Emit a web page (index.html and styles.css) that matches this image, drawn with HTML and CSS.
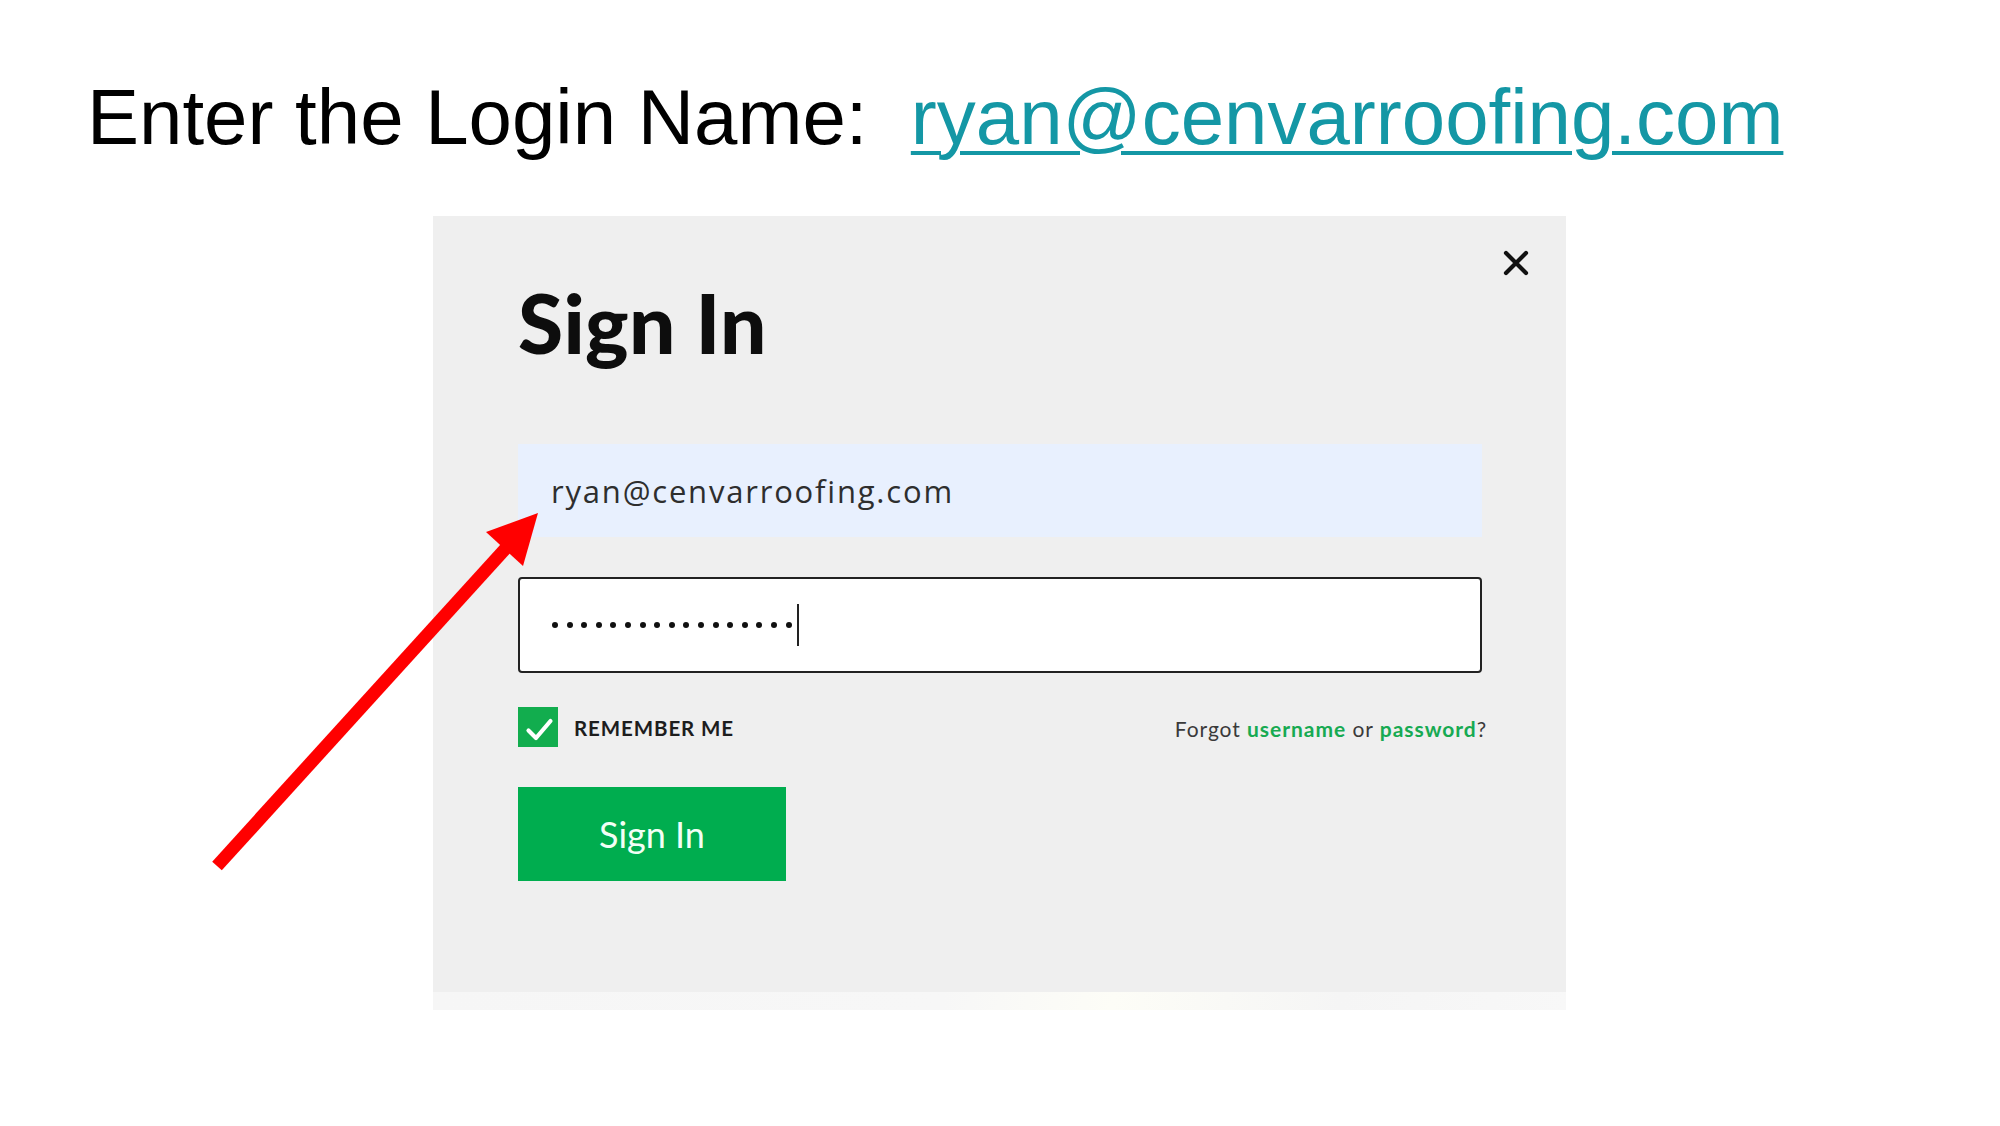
FILE: index.html
```html
<!DOCTYPE html>
<html lang="en">
<head>
<meta charset="utf-8">
<title>Enter the Login Name</title>
<link rel="stylesheet" href="styles.css">
</head>
<body>
<div class="slide">
  <h1 class="slide-title">Enter the Login Name:&nbsp;&nbsp;<a class="slide-link" href="#">ryan@cenvarroofing.com</a></h1>

  <div class="modal">
    <button class="close-btn" aria-label="Close">
      <svg width="26" height="26" viewBox="0 0 26 26"><path d="M3 3 L23 23 M23 3 L3 23" stroke="#111" stroke-width="4.2" stroke-linecap="round"/></svg>
    </button>
    <div class="modal-body">
      <h2 class="modal-title">Sign In</h2>
      <div class="field field-filled">ryan@cenvarroofing.com</div>
      <div class="field field-password">
        <div class="dots">
          <span></span><span></span><span></span><span></span><span></span><span></span><span></span><span></span><span></span><span></span><span></span><span></span><span></span><span></span><span></span><span></span><span></span>
        </div>
        <span class="caret"></span>
      </div>
      <div class="options">
        <label class="remember">
          <span class="checkbox">
            <svg width="40" height="40" viewBox="0 0 40 40"><path d="M10.5 23.5 L18 31 L32.5 14" fill="none" stroke="#fff" stroke-width="4.2" stroke-linecap="round" stroke-linejoin="round"/></svg>
          </span>
          <span class="remember-text">REMEMBER ME</span>
        </label>
        <div class="forgot">Forgot <a href="#">username</a> or <a href="#">password</a>?</div>
      </div>
      <button class="signin-btn">Sign In</button>
    </div>
    <div class="modal-foot"></div>
  </div>

  <svg class="arrow" width="2000" height="1126" viewBox="0 0 2000 1126">
    <line x1="217" y1="866" x2="506" y2="548" stroke="#ff0000" stroke-width="13"/>
    <polygon points="538,513 486,532 523,566" fill="#ff0000"/>
  </svg>
</div>
</body>
</html>
```
FILE: styles.css
```css
* { box-sizing: border-box; }

html, body {
  margin: 0;
  padding: 0;
  background: #ffffff;
  overflow: hidden;
}

.slide {
  position: relative;
  width: 2000px;
  height: 1126px;
  padding-top: 72px;
}

.slide-title {
  margin: 0;
  padding-left: 87px;
  font-family: "Liberation Sans", Arial, sans-serif;
  font-weight: 400;
  font-size: 78px;
  line-height: 90px;
  color: #000;
  white-space: nowrap;
}

.slide-link {
  color: #1497a5;
  text-decoration: underline;
  text-decoration-thickness: 4px;
  text-underline-offset: 7px;
}

.modal {
  position: relative;
  margin-top: 54px;
  margin-left: 433px;
  width: 1133px;
  height: 794px;
  background: #efefef;
  display: flex;
  flex-direction: column;
}

.close-btn {
  position: absolute;
  left: 1070px;
  top: 34px;
  width: 26px;
  height: 26px;
  padding: 0;
  border: 0;
  background: transparent;
}

.close-btn svg { display: block; }

.modal-body {
  flex: 1;
  padding: 58px 0 0 85px;
  font-family: Lato, "Open Sans", sans-serif;
}

.modal-title {
  margin: 0;
  font-family: Lato, sans-serif;
  font-weight: 900;
  font-size: 82px;
  line-height: 96px;
  color: #0d0d0d;
  letter-spacing: 0.3px;
}

.field {
  width: 964px;
  height: 93px;
  display: flex;
  align-items: center;
}

.field-filled {
  margin-top: 74px;
  background: #e8f0fe;
  padding-left: 33px;
  font-family: "Open Sans", sans-serif;
  font-size: 31px;
  line-height: 40px;
  letter-spacing: 1.8px;
  color: #2e2e2e;
}

.field-password {
  margin-top: 40px;
  height: 96px;
  background: #ffffff;
  border: 2.5px solid #222;
  border-radius: 4px;
  padding-left: 32px;
}

.dots {
  display: flex;
  gap: 8.6px;
}

.dots span {
  width: 6px;
  height: 6px;
  border-radius: 50%;
  background: #111;
}

.caret {
  width: 2px;
  height: 42px;
  margin-left: 5px;
  background: #222;
}

.options {
  margin-top: 34px;
  width: 969px;
  height: 40px;
  display: flex;
  align-items: center;
  justify-content: space-between;
}

.remember {
  display: flex;
  align-items: center;
  gap: 16px;
}

.checkbox {
  width: 40px;
  height: 40px;
  background: #12ad4e;
}

.checkbox svg { display: block; }

.remember-text {
  font-family: Lato, sans-serif;
  font-weight: 700;
  font-size: 20.5px;
  letter-spacing: 0.9px;
  color: #1d1d1d;
  padding-top: 2px;
}

.forgot {
  font-family: Lato, sans-serif;
  font-size: 21px;
  color: #3a3a3a;
  padding-top: 2px;
  letter-spacing: 0.95px;
}

.forgot a {
  color: #17aa52;
  font-weight: 700;
  text-decoration: none;
}

.signin-btn {
  display: block;
  margin-top: 40px;
  width: 268px;
  height: 94px;
  border: 0;
  padding: 0;
  background: #00ad4f;
  color: #f2fff5;
  font-family: Lato, sans-serif;
  font-size: 36px;
  font-weight: 400;
}

.modal-foot {
  height: 18px;
  background: linear-gradient(100deg, #f6f6f6 0%, #f7f7f7 45%, #fdfdf7 60%, #f5f5f5 80%, #f8f8f8 100%);
}

.arrow {
  position: absolute;
  left: 0;
  top: 0;
  pointer-events: none;
}
```
